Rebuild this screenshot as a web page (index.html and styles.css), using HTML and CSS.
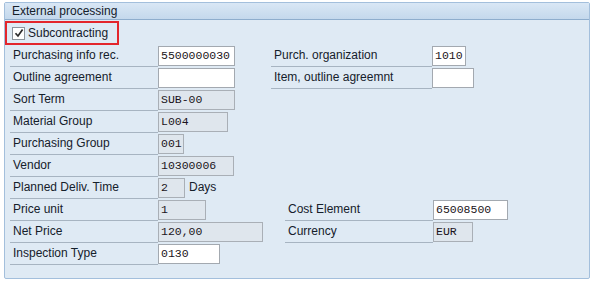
FILE: index.html
```html
<!DOCTYPE html>
<html lang="en">
<head>
    <meta charset="UTF-8">
    <title>External processing</title>
    <link rel="stylesheet" href="styles.css">
</head>
<body>
    <div class="frame">
        <div class="frame-title">External processing</div>

        <div class="sub-box">
            <span class="checkbox">
                <svg width="10" height="10" viewBox="0 0 10 10"><path d="M1.5 5.2 L4 8 L8.6 1.6" fill="none" stroke="#2b2b2b" stroke-width="1.7"/></svg>
            </span>
            <span>Subcontracting</span>
        </div>

        <!-- field rows -->
        <div class="row">
            <div class="field"><label>Purchasing info rec.</label><span class="input w76">5500000030</span></div>
            <div class="field right-a"><label>Purch. organization</label><span class="input w33">1010</span></div>
        </div>
        <div class="row">
            <div class="field"><label>Outline agreement</label><span class="input w76"></span></div>
            <div class="field right-a"><label>Item, outline agreemnt</label><span class="input w41"></span></div>
        </div>
        <div class="row">
            <div class="field"><label>Sort Term</label><span class="input ro w76">SUB-00</span></div>
        </div>
        <div class="row">
            <div class="field"><label>Material Group</label><span class="input ro w69">L004</span></div>
        </div>
        <div class="row">
            <div class="field"><label>Purchasing Group</label><span class="input ro w25">001</span></div>
        </div>
        <div class="row">
            <div class="field"><label>Vendor</label><span class="input ro w75">10300006</span></div>
        </div>
        <div class="row">
            <div class="field"><label>Planned Deliv. Time</label><span class="input ro w26">2</span><span class="unit">Days</span></div>
        </div>
        <div class="row">
            <div class="field"><label>Price unit</label><span class="input ro w47">1</span></div>
            <div class="field right-b"><label>Cost Element</label><span class="input w74">65008500</span></div>
        </div>
        <div class="row">
            <div class="field"><label>Net Price</label><span class="input ro w104">120,00</span></div>
            <div class="field right-c"><label>Currency</label><span class="input ro w39">EUR</span></div>
        </div>
        <div class="row">
            <div class="field"><label>Inspection Type</label><span class="input w61">0130</span></div>
        </div>
    </div>
</body>
</html>
```

FILE: styles.css
```css
body {
    margin: 0;
    padding: 0;
    background-color: #ffffff;
    font-family: "Liberation Sans", Arial, sans-serif;
    font-size: 12px;
    color: #15202b;
}

.frame {
    margin: 2px 0 0 4px;
    width: 584px;
    height: 275px;
    border: 1px solid #a3bfdc;
    border-radius: 2px;
    background-color: #dfeaf4;
}

.frame-title {
    height: 16px;
    line-height: 16px;
    padding-left: 7px;
    border-bottom: 1px solid #8eadcd;
    background: linear-gradient(#d9e7f5, #c4d8ec);
}

.sub-box {
    margin-top: 1px;
    width: 110px;
    height: 20px;
    border: 2px solid #e3262c;
    display: flex;
    align-items: center;
}

.checkbox {
    width: 11px;
    height: 11px;
    margin: 0 3px 0 5px;
    border: 1px solid #8c949c;
    background-color: #ffffff;
    display: flex;
    align-items: center;
    justify-content: center;
}

.row {
    height: 22px;
    display: flex;
}

.field {
    display: flex;
    align-items: flex-start;
}

.field label {
    width: 145px;
    height: 21px;
    padding-left: 3px;
    line-height: 21px;
    border-bottom: 1px solid #a7b4c1;
    margin-left: 5px;
}

.right-a {
    margin-left: 36px;
}

.row .right-a label {
    width: 158px;
    margin-left: 0;
}

.right-b {
    margin-left: 74px;
}

.right-c {
    margin-left: 17px;
}

.input {
    height: 18px;
    line-height: 18px;
    margin-top: 1px;
    padding-left: 2px;
    border: 1px solid #a3a9b0;
    background-color: #ffffff;
    font-family: "Liberation Mono", "Courier New", monospace;
    font-size: 11.5px;
    color: #1b1420;
}

.input.ro {
    background-color: #dfe6ed;
    border-color: #a9afb6;
}

.unit {
    margin-left: 4px;
    line-height: 21px;
}

.w25 { width: 22px; }
.w26 { width: 23px; }
.w33 { width: 30px; }
.w39 { width: 36px; }
.w41 { width: 38px; }
.w47 { width: 44px; }
.w61 { width: 58px; }
.w69 { width: 66px; }
.w74 { width: 71px; }
.w75 { width: 72px; }
.w76 { width: 73px; }
.w104 { width: 101px; }
```
